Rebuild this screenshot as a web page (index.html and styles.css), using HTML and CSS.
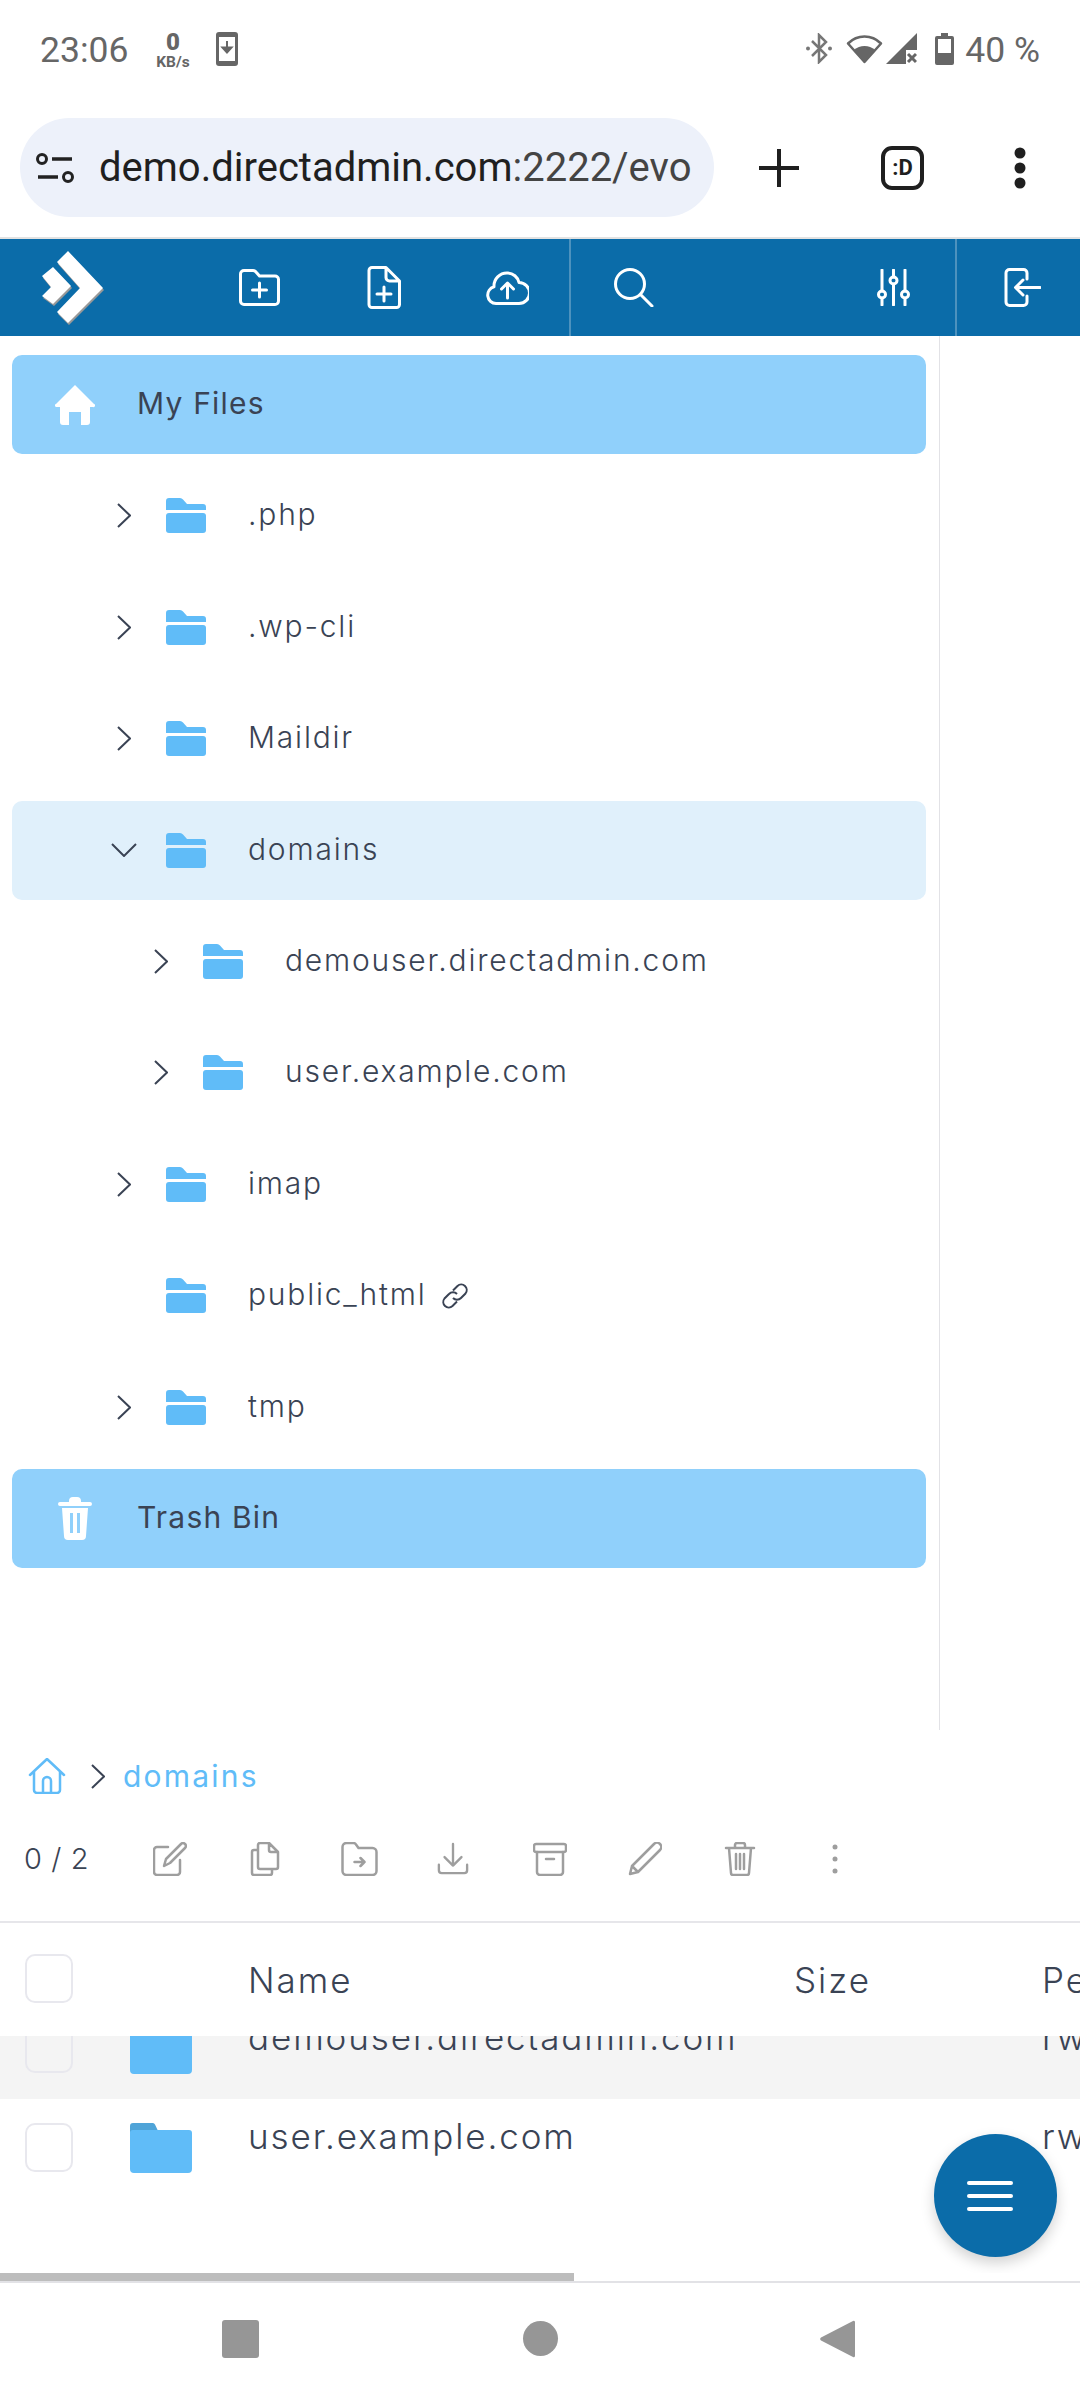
FILE: index.html
```html
<!DOCTYPE html>
<html lang="en">
<head>
<meta charset="utf-8">
<title>File Manager</title>
<link rel="stylesheet" href="styles.css">
</head>
<body>
<div class="screen">
  <div class="status">
    <span class="clock">23:06</span>
    <span class="speed"><b>0</b><i>KB/s</i></span>
    <svg class="st-phone" viewBox="0 0 22 34"><rect width="22" height="34" rx="3" fill="#666"/><rect x="3" y="5" width="16" height="24" fill="#fff"/><path d="M11 9v11M6.500 15.500 11 20.500l4.500-5z" stroke="#666" stroke-width="2" fill="#666"/></svg>
    <span class="status-right">
      <svg class="st-bt" viewBox="0 0 26 31"><path d="M6 8l14 14-7 7V2l7 7L6 23" fill="none" stroke="#777" stroke-width="2.500"/><circle cx="2" cy="15.500" r="2" fill="#777"/><circle cx="24" cy="15.500" r="2" fill="#777"/></svg>
      <svg class="st-wifi" viewBox="0 0 37 31"><path d="M18.500 29 2 10.500C6.500 6 12 3.500 18.500 3.500S30.500 6 35 10.500z" fill="none" stroke="#666" stroke-width="2.500" stroke-linejoin="round"/><path d="M18.500 29 8 17c3-2.500 6.500-4 10.500-4s7.500 1.500 10.500 4z" fill="#666"/></svg>
      <svg class="st-signal" viewBox="0 0 31 31"><path d="M31 0v17H20v14H0z" fill="#666"/><path d="M22 21l8 8M30 21l-8 8" stroke="#666" stroke-width="3"/></svg>
      <svg class="st-batt" viewBox="0 0 19 32"><path d="M6 0h7v3h4a2 2 0 0 1 2 2v25a2 2 0 0 1-2 2H2a2 2 0 0 1-2-2V5a2 2 0 0 1 2-2h4z" fill="#666"/><rect x="3" y="6" width="13" height="14" fill="#fff"/></svg>
      <span class="batt-text">40 %</span>
    </span>
  </div>

  <div class="chrome">
    <div class="pill">
      <svg class="tune" viewBox="0 0 38 30"><circle cx="6" cy="6" r="4.500" fill="none" stroke="#222" stroke-width="3"/><path d="M16 6h20M2 24h20" stroke="#222" stroke-width="3.500"/><circle cx="32" cy="24" r="4.500" fill="none" stroke="#222" stroke-width="3"/></svg>
      <span class="url"><span class="url-host">demo.directadmin.com</span><span class="url-path">:2222/evo</span></span>
    </div>
    <svg class="plus" viewBox="0 0 40 38"><path d="M20 0v38M0 19h40" stroke="#1f1f1f" stroke-width="4" stroke-linecap="round"/></svg>
    <span class="tabs">:D</span>
    <svg class="menu" viewBox="0 0 12 42"><circle cx="6" cy="6" r="5.500" fill="#1f1f1f"/><circle cx="6" cy="21" r="5.500" fill="#1f1f1f"/><circle cx="6" cy="36" r="5.500" fill="#1f1f1f"/></svg>
  </div>

  <header class="topbar">
    <div class="tb-group tb-main">
      <svg class="logo" viewBox="0 0 66 78">
        <g fill="#999"><path d="M29 4l35 37-35 35-11-11 23-24-23-26zM14 20l18 19-18 18-11-8 9-9-9-11z"/></g>
        <g fill="#fff"><path d="M28 2l35 37-35 35-11-11 23-24-23-26zM13 18l18 19-18 18-11-8 9-9-9-11z"/></g>
      </svg>
      <svg class="ti ti-newfolder" viewBox="0 0 41 37"><path d="M1.500 5a3.500 3.500 0 0 1 3.500-3.500h9a4 4 0 0 1 3 1.500l3.500 4H36a3.500 3.500 0 0 1 3.500 3.500V32a3.500 3.500 0 0 1-3.500 3.500H5A3.500 3.500 0 0 1 1.500 32zM20.500 14v14M13.500 21h14"/></svg>
      <svg class="ti ti-newfile" viewBox="0 0 34 43"><path d="M5 1.500h14l13.500 13.500v23.500a3 3 0 0 1-3 3H5a3 3 0 0 1-3-3v-34a3 3 0 0 1 3-3zM19 1.500v10a3.500 3.500 0 0 0 3.500 3.500h10M17 21v14M10 28h14"/></svg>
      <svg class="ti ti-upload" viewBox="0 0 43 34"><path d="M10 32.500a8.500 8.500 0 0 1-2-16.700A13 13 0 0 1 21.500 2 12 12 0 0 1 33 11.500a10.500 10.500 0 0 1 0 21zM21.500 27V12M15.500 18l6-6 6 6"/></svg>
    </div>
    <div class="tb-group tb-tools">
      <svg class="ti ti-search" viewBox="0 0 41 39"><circle cx="17" cy="16" r="14.500"/><path d="M27.500 26.500 39 38"/></svg>
      <svg class="ti ti-sliders" viewBox="0 0 35 37"><path d="M6 1v21M6 29v7M17.500 1v7M17.500 15v21M29 1v21M29 29v7"/><circle cx="6" cy="25.500" r="3.500"/><circle cx="17.500" cy="11.500" r="3.500"/><circle cx="29" cy="25.500" r="3.500"/></svg>
    </div>
    <div class="tb-group tb-exit">
      <svg class="ti ti-exit" viewBox="0 0 37 39"><path d="M23 11V5a3.500 3.500 0 0 0-3.500-3.500h-14A3.500 3.500 0 0 0 2 5v29a3.500 3.500 0 0 0 3.500 3.500h14A3.500 3.500 0 0 0 23 34v-6M36 19.500H12M19 12l-7.500 7.500L19 27"/></svg>
    </div>
  </header>

  <section class="tree">
    <div class="root-row">
      <span class="root-icon"><svg class="i-home" viewBox="0 0 40 40"><path d="M20 0 39 19a1.500 1.500 0 0 1-1 3h-3v15a3 3 0 0 1-3 3h-6V27H14v13H8a3 3 0 0 1-3-3V22H2a1.500 1.500 0 0 1-1-3z" fill="#fff"/></svg></span>
      <span class="label">My Files</span>
    </div>
    <div class="node"><svg class="chev" viewBox="0 0 14 25"><path d="M1 1l12 11.500L1 24"/></svg><svg class="fold" viewBox="0 0 40 35"><use href="#f"/></svg><span class="label">.php</span></div>
    <div class="node"><svg class="chev" viewBox="0 0 14 25"><path d="M1 1l12 11.500L1 24"/></svg><svg class="fold" viewBox="0 0 40 35"><use href="#f"/></svg><span class="label">.wp-cli</span></div>
    <div class="node"><svg class="chev" viewBox="0 0 14 25"><path d="M1 1l12 11.500L1 24"/></svg><svg class="fold" viewBox="0 0 40 35"><use href="#f"/></svg><span class="label">Maildir</span></div>
    <div class="node node-open"><svg class="chev chev-down" viewBox="0 0 26 14"><path d="M1 1l12 12L25 1"/></svg><svg class="fold" viewBox="0 0 40 35"><use href="#f"/></svg><span class="label">domains</span></div>
    <div class="node node-sub"><svg class="chev" viewBox="0 0 14 25"><path d="M1 1l12 11.500L1 24"/></svg><svg class="fold" viewBox="0 0 40 35"><use href="#f"/></svg><span class="label">demouser.directadmin.com</span></div>
    <div class="node node-sub"><svg class="chev" viewBox="0 0 14 25"><path d="M1 1l12 11.500L1 24"/></svg><svg class="fold" viewBox="0 0 40 35"><use href="#f"/></svg><span class="label">user.example.com</span></div>
    <div class="node"><svg class="chev" viewBox="0 0 14 25"><path d="M1 1l12 11.500L1 24"/></svg><svg class="fold" viewBox="0 0 40 35"><use href="#f"/></svg><span class="label">imap</span></div>
    <div class="node"><span class="chev"></span><svg class="fold" viewBox="0 0 40 35"><use href="#f"/></svg><span class="label">public_html</span><svg class="link" viewBox="0 0 28 28"><path d="M12 8.500 16.500 4a5.500 5.500 0 0 1 8 7.500L20 16a5.500 5.500 0 0 1-8 0M16 19.500 11.500 24a5.500 5.500 0 0 1-8-7.500L8 12a5.500 5.500 0 0 1 8 0"/></svg></div>
    <div class="node"><svg class="chev" viewBox="0 0 14 25"><path d="M1 1l12 11.500L1 24"/></svg><svg class="fold" viewBox="0 0 40 35"><use href="#f"/></svg><span class="label">tmp</span></div>
    <div class="root-row">
      <span class="root-icon root-icon-trash"><svg class="i-trash" viewBox="0 0 34 45"><path d="M11 6V5a4 4 0 0 1 4-4h4a4 4 0 0 1 4 4v1h9a1.500 1.500 0 0 1 0 4H2a1.500 1.500 0 0 1 0-4z" fill="#fff"/><path d="M4 12h26l-2 28a4 4 0 0 1-4 4H10a4 4 0 0 1-4-4zM12 17v20h3V17zM19 17v20h3V17z" fill="#fff" fill-rule="evenodd"/></svg></span>
      <span class="label">Trash Bin</span>
    </div>
  </section>

  <nav class="crumbs">
    <svg class="c-home" viewBox="0 0 38 36"><path d="M2 17 19 1l17 16M6 14v18a3 3 0 0 0 3 3h20a3 3 0 0 0 3-3V14M15 35V23a4 4 0 0 1 8 0v12"/></svg>
    <svg class="c-chev" viewBox="0 0 14 25"><path d="M1 1l12 11.500L1 24"/></svg>
    <span class="c-text">domains</span>
  </nav>

  <div class="actions">
    <span class="count">0 / 2</span>
    <span class="act"><svg viewBox="0 0 34 34"><path d="M15 5H4a3 3 0 0 0-3 3v22a3 3 0 0 0 3 3h20a3 3 0 0 0 3-3V18M11 24l2-7L28 2a2.800 2.800 0 0 1 4 4L17 21z"/></svg></span>
    <span class="act"><svg viewBox="0 0 34 34"><path d="M12 1h9l9 9v15a2 2 0 0 1-2 2H12a2 2 0 0 1-2-2V3a2 2 0 0 1 2-2zM21 1v7a2 2 0 0 0 2 2h7M10 8H6a2 2 0 0 0-2 2v21a2 2 0 0 0 2 2h16a2 2 0 0 0 2-2v-4"/></svg></span>
    <span class="act act-wide"><svg viewBox="0 0 36 34"><path d="M1 5a4 4 0 0 1 4-4h7a3 3 0 0 1 2.500 1.500L17 6h14a4 4 0 0 1 4 4v19a4 4 0 0 1-4 4H5a4 4 0 0 1-4-4zM13 20h10M19 16l4 4-4 4"/></svg></span>
    <span class="act act-down"><svg viewBox="0 0 34 34"><path d="M17 1v23M8 15l9 9 9-9M2 23v6a3 3 0 0 0 3 3h24a3 3 0 0 0 3-3v-6"/></svg></span>
    <span class="act"><svg viewBox="0 0 34 34"><rect x="1" y="2" width="32" height="8" rx="2"/><path d="M4 10v20a3 3 0 0 0 3 3h20a3 3 0 0 0 3-3V10M13 17h8"/></svg></span>
    <span class="act"><svg viewBox="0 0 34 34"><path d="M2 32l2-8L26 2a3 3 0 0 1 6 6L10 30zM4 24l6 6"/></svg></span>
    <span class="act"><svg viewBox="0 0 30 34"><path d="M1 6h28M10 6V3a2 2 0 0 1 2-2h6a2 2 0 0 1 2 2v3M4 6l2 25a2 2 0 0 0 2 2h14a2 2 0 0 0 2-2l2-25M11 12v15M15 12v15M19 12v15"/></svg></span>
    <span class="act act-more"><svg viewBox="0 0 6 34"><circle cx="3" cy="5" r="2.500"/><circle cx="3" cy="17" r="2.500"/><circle cx="3" cy="29" r="2.500"/></svg></span>
  </div>

  <div class="thead">
    <span class="check"></span>
    <span></span>
    <span>Name</span>
    <span>Size</span>
    <span>Permissions</span>
  </div>

  <div class="tbody">
    <div class="tlist">
      <div class="trow trow-hover">
        <span class="check"></span>
        <svg class="tfold" viewBox="0 0 62 50"><use href="#tf"/></svg>
        <span class="tname">demouser.directadmin.com</span>
        <span></span>
        <span class="tname">rwxr-xr-x</span>
      </div>
      <div class="trow">
        <span class="check"></span>
        <svg class="tfold" viewBox="0 0 62 50"><use href="#tf"/></svg>
        <span class="tname">user.example.com</span>
        <span></span>
        <span class="tname">rwxr-xr-x</span>
      </div>
    </div>
    <button class="fab" type="button" aria-label="Menu"><span></span><span></span><span></span></button>
  </div>

  <div class="hscroll"><div class="hthumb"></div></div>

  <div class="navbar">
    <span class="nav-square"></span>
    <span class="nav-circle"></span>
    <svg class="nav-back" viewBox="0 0 35 40"><path d="M33 2a1.500 1.500 0 0 1 2 1v34a1.500 1.500 0 0 1-2 1L1 21.500a2 2 0 0 1 0-3z" fill="#969696"/></svg>
  </div>
</div>

<svg class="defs" aria-hidden="true">
  <symbol id="f" viewBox="0 0 40 35"><path d="M0 12V3a3 3 0 0 1 3-3h11a4 4 0 0 1 3 1.500L21 6h16a3 3 0 0 1 3 3v3z" fill="#60bcf8"/><rect y="15" width="40" height="20" rx="3" fill="#60bcf8"/></symbol>
  <symbol id="tf" viewBox="0 0 62 50"><path d="M0 20V3a3 3 0 0 1 3-3h19a3 3 0 0 1 3 1.500L29 10H0z" fill="#4fa4d8"/><path d="M0 9a3 3 0 0 1 3-2h56a3 3 0 0 1 3 3v36a4 4 0 0 1-4 4H4a4 4 0 0 1-4-4z" fill="#60bcf8"/></symbol>
</svg>
</body>
</html>
```
FILE: styles.css
```css
* { box-sizing: border-box; }
html, body { margin: 0; padding: 0; background: #fff; }
body { font-family: Inter, "Noto Sans", sans-serif; color: #3a4354; }
.screen { width: 1080px; height: 2400px; overflow: hidden; display: flex; flex-direction: column; }
svg { display: block; flex: none; }
.defs { width: 0; height: 0; position: absolute; }

/* status bar */
.status { height: 118px; flex: none; display: flex; align-items: flex-start; padding: 32px 40px 0; font-family: Roboto, sans-serif; color: #666; }
.clock { font-size: 35.500px; line-height: 36px; width: 117px; }
.speed { display: flex; flex-direction: column; align-items: center; margin-top: -1px; width: 32px; font-weight: 700; }
.speed b { font-size: 24px; line-height: 22px; }
.speed i { font-style: normal; font-size: 15.500px; line-height: 14px; white-space: nowrap; margin-top: 2px; }
.st-phone { width: 22px; height: 34px; margin-left: 27px; }
.status-right { margin-left: auto; display: flex; align-items: flex-start; }
.st-bt { width: 26px; height: 31px; margin-top: 1px; }
.st-wifi { width: 37px; height: 31px; margin-left: 14px; margin-top: 1px; }
.st-signal { width: 31px; height: 31px; margin-left: 3px; margin-top: 1px; }
.st-batt { width: 19px; height: 32px; margin-left: 18px; margin-top: 1px; }
.batt-text { font-size: 35.500px; line-height: 36px; margin-left: 11px; }

/* browser bar */
.chrome { height: 121px; flex: none; display: flex; align-items: flex-start; padding-left: 20px; border-bottom: 2px solid #e2e2e2; }
.pill { width: 694px; height: 99px; border-radius: 50px; background: #edf1fa; display: flex; align-items: center; padding-left: 16px; overflow: hidden; }
.tune { width: 38px; height: 30px; }
.url { margin-left: 25px; font-family: Roboto, sans-serif; font-size: 40px; white-space: nowrap; }
.url-host { color: #1f1f1f; }
.url-path { color: #444; }
.plus { width: 40px; height: 38px; margin: 31px 0 0 45px; }
.tabs { width: 43px; height: 44px; margin: 28px 0 0 82px; border: 4px solid #1f1f1f; border-radius: 11px; font: 700 22px/36px Roboto, sans-serif; color: #1f1f1f; text-align: center; }
.menu { width: 12px; height: 42px; margin: 29px 0 0 90px; }

/* app top bar */
.topbar { height: 97px; flex: none; background: #0b6ca9; display: flex; align-items: stretch; }
.tb-group { display: flex; align-items: center; position: relative; }
.tb-main { width: 571px; border-right: 2px solid #4d92be; }
.tb-tools { width: 386px; border-right: 2px solid #4d92be; justify-content: space-between; padding: 0 44px 0 42px; }
.tb-exit { flex: 1; padding-left: 47px; }
.logo { width: 66px; height: 78px; margin-left: 40px; }
.ti { fill: none; stroke: #fff; stroke-width: 3; stroke-linecap: round; stroke-linejoin: round; }
.ti-newfolder { width: 41px; height: 37px; margin-left: 133px; }
.ti-newfile { width: 34px; height: 43px; margin-left: 87px; }
.ti-upload { width: 43px; height: 34px; margin-left: 85px; }
.ti-search { width: 41px; height: 39px; }
.ti-sliders { width: 35px; height: 37px; }
.ti-exit { width: 37px; height: 39px; }

/* tree */
.tree { height: 1394px; flex: none; width: 940px; border-right: 1px solid #e2e2e6; padding: 19px 13px 0 12px; display: flex; flex-direction: column; gap: 12.400px; font-size: 30px; letter-spacing: 1.800px; }
.label { padding-bottom: 3px; }
.root-row { height: 99px; flex: none; background: #90d0fb; border-radius: 10px; display: flex; align-items: center; font-weight: 400; letter-spacing: 1.200px; }
.root-icon { width: 125px; padding-left: 43px; flex: none; }
.root-icon-trash { padding-left: 46px; }
.i-home { width: 40px; height: 40px; }
.i-trash { width: 34px; height: 45px; }
.node { height: 99px; flex: none; display: flex; align-items: center; padding-left: 105px; border-radius: 10px; font-weight: 300; }
.node-open { background: #e0f0fb; }
.node-sub { padding-left: 142px; }
.chev { width: 14px; height: 25px; margin-right: 35px; fill: none; stroke: #3a4354; stroke-width: 2; flex: none; }
.chev-down { width: 26px; height: 14px; margin-left: -6px; margin-right: 29px; }
.fold { width: 40px; height: 35px; margin-right: 42px; }
.link { width: 28px; height: 28px; margin-left: 14px; fill: none; stroke: #3a4354; stroke-width: 2; }

/* breadcrumb */
.crumbs { height: 92px; flex: none; display: flex; align-items: center; padding: 0 0 0 28px; }
.c-home { width: 38px; height: 36px; fill: none; stroke: #60bcf8; stroke-width: 2.500; stroke-linecap: round; stroke-linejoin: round; }
.c-chev { width: 14px; height: 25px; margin-left: 25px; fill: none; stroke: #3a4354; stroke-width: 2; }
.c-text { margin-left: 18px; color: #60bcf8; font-size: 30px; letter-spacing: 2.200px; font-weight: 400; }

/* action row */
.actions { height: 101px; flex: none; display: flex; align-items: center; border-bottom: 2px solid #e6e6ea; padding: 0 0 26px 24px; }
.count { width: 98px; font-size: 29px; font-weight: 300; white-space: nowrap; letter-spacing: .6px; }
.act { width: 95px; display: flex; justify-content: center; }
.act svg { height: 34px; width: 34px; fill: none; stroke: #9e9e9e; stroke-width: 2.500; stroke-linecap: round; stroke-linejoin: round; }
.act-wide svg { width: 37px; }
.act-down svg { width: 32px; margin-right: 3px; }
.act-more svg { width: 6px; fill: #9e9e9e; stroke: none; }

/* table */
.thead, .trow { display: grid; grid-template-columns: 105px 118px 546px 248px 300px; padding-left: 25px; width: 1342px; }
.thead { height: 113px; flex: none; align-items: center; font-size: 35px; font-weight: 300; letter-spacing: 2px; background: #fff; white-space: nowrap; }
.check { width: 48px; height: 49px; border: 2px solid #e8e8ee; border-radius: 10px; display: block; }
.thead .check { margin-top: -2px; }
.tbody { height: 237px; flex: none; position: relative; overflow: hidden; }
.tlist { margin-top: -36px; }
.trow { height: 99px; padding-top: 24px; font-size: 35px; font-weight: 300; letter-spacing: 1.900px; white-space: nowrap; line-height: 30px; }
.trow-hover { background: #f4f4f4; width: 1080px; overflow: hidden; }
.tname { display: block; line-height: 30px; margin-top: -2px; }
.tfold { width: 62px; height: 50px; }
.fab { position: absolute; left: 934px; top: 98px; width: 123px; height: 123px; border: 0; border-radius: 50%; background: #0b6ca9; box-shadow: 0 6px 14px rgba(0,0,0,.18); display: flex; flex-direction: column; align-items: center; justify-content: center; gap: 9px; padding: 0; }
.fab span { width: 46px; height: 4px; border-radius: 2px; background: #fff; margin-right: 11px; }

/* bottom */
.hscroll { height: 10px; flex: none; border-bottom: 2px solid #e2e2e6; }
.hthumb { width: 574px; height: 8px; background: #bdbdbd; }
.navbar { flex: 1; display: flex; align-items: center; padding-left: 222px; margin-top: -6px; }
.nav-square { width: 37px; height: 38px; border-radius: 3px; background: #969696; }
.nav-circle { width: 35px; height: 35px; border-radius: 50%; background: #969696; margin-left: 264px; }
.nav-back { width: 35px; height: 40px; margin-left: 262px; }
```
